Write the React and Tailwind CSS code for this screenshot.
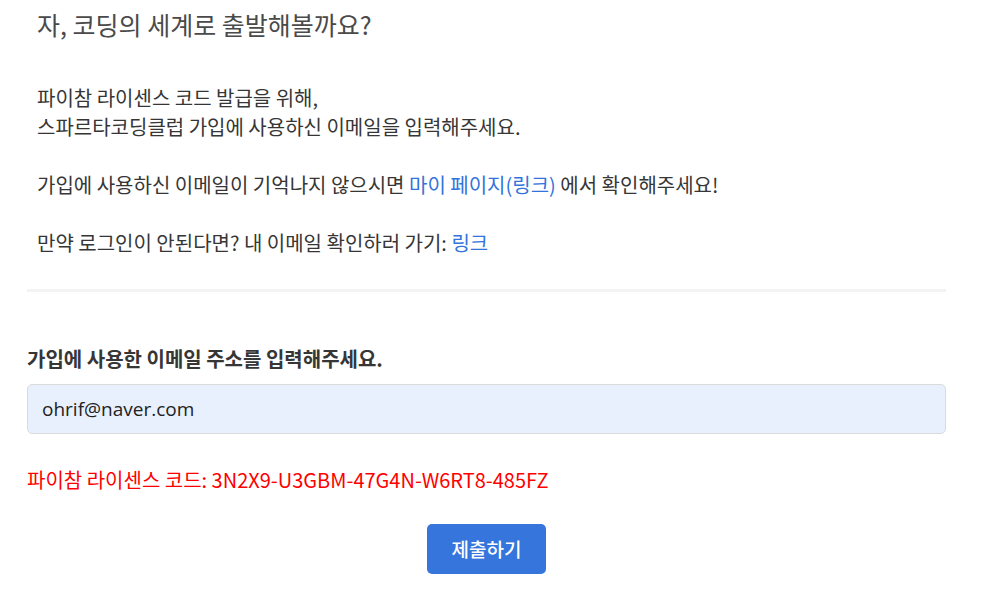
export default function App() {
  const font = { fontFamily: '"Noto Sans CJK KR", "Noto Sans", sans-serif' };

  return (
    <div className="min-h-screen bg-white" style={font}>
      <div className="ml-[27px] w-[919px] pt-[9px]">
        {/* Intro */}
        <div className="px-[10px]">
          <h1 className="text-[25px] leading-[30px] text-[#4a4a4a]">
            자, 코딩의 세계로 출발해볼까요?
          </h1>
          <p className="mt-[44px] text-[20px] leading-[29px] text-[#363636]">
            파이참 라이센스 코드 발급을 위해,
            <br />
            스파르타코딩클럽 가입에 사용하신 이메일을 입력해주세요.
            <br />
            <br />
            가입에 사용하신 이메일이 기억나지 않으시면{" "}
            <a className="text-[#3273dc]" href="#">
              마이 페이지(링크)
            </a>{" "}
            에서 확인해주세요!
            <br />
            <br />
            만약 로그인이 안된다면? 내 이메일 확인하러 가기:{" "}
            <a className="text-[#3273dc]" href="#">
              링크
            </a>
          </p>
        </div>

        <hr className="mt-[32px] h-[3px] border-0 bg-[#f3f3f3]" />

        {/* Form */}
        <div className="mt-[53px]">
          <label className="block text-[20px] font-bold leading-[27px] text-[#363636]">
            가입에 사용한 이메일 주소를 입력해주세요.
          </label>
          <input
            className="mt-[12px] block h-[50px] w-full rounded-[5px] border border-[#dbdbdb] bg-[#e8f0fe] px-[14px] text-[19px] text-[#222] outline-none"
            style={{ fontFamily: '"Open Sans", "Noto Sans", sans-serif' }}
            defaultValue="ohrif@naver.com"
          />
          <p className="mt-[32px] text-[20px] leading-[28px] text-[#ff0000]">
            파이참 라이센스 코드: 3N2X9-U3GBM-47G4N-W6RT8-485FZ
          </p>
          <div className="mt-[30px] flex justify-center">
            <button className="h-[50px] w-[119px] rounded-[5px] bg-[#3575dc] text-[19px] font-medium text-white">
              제출하기
            </button>
          </div>
        </div>
      </div>
    </div>
  );
}
